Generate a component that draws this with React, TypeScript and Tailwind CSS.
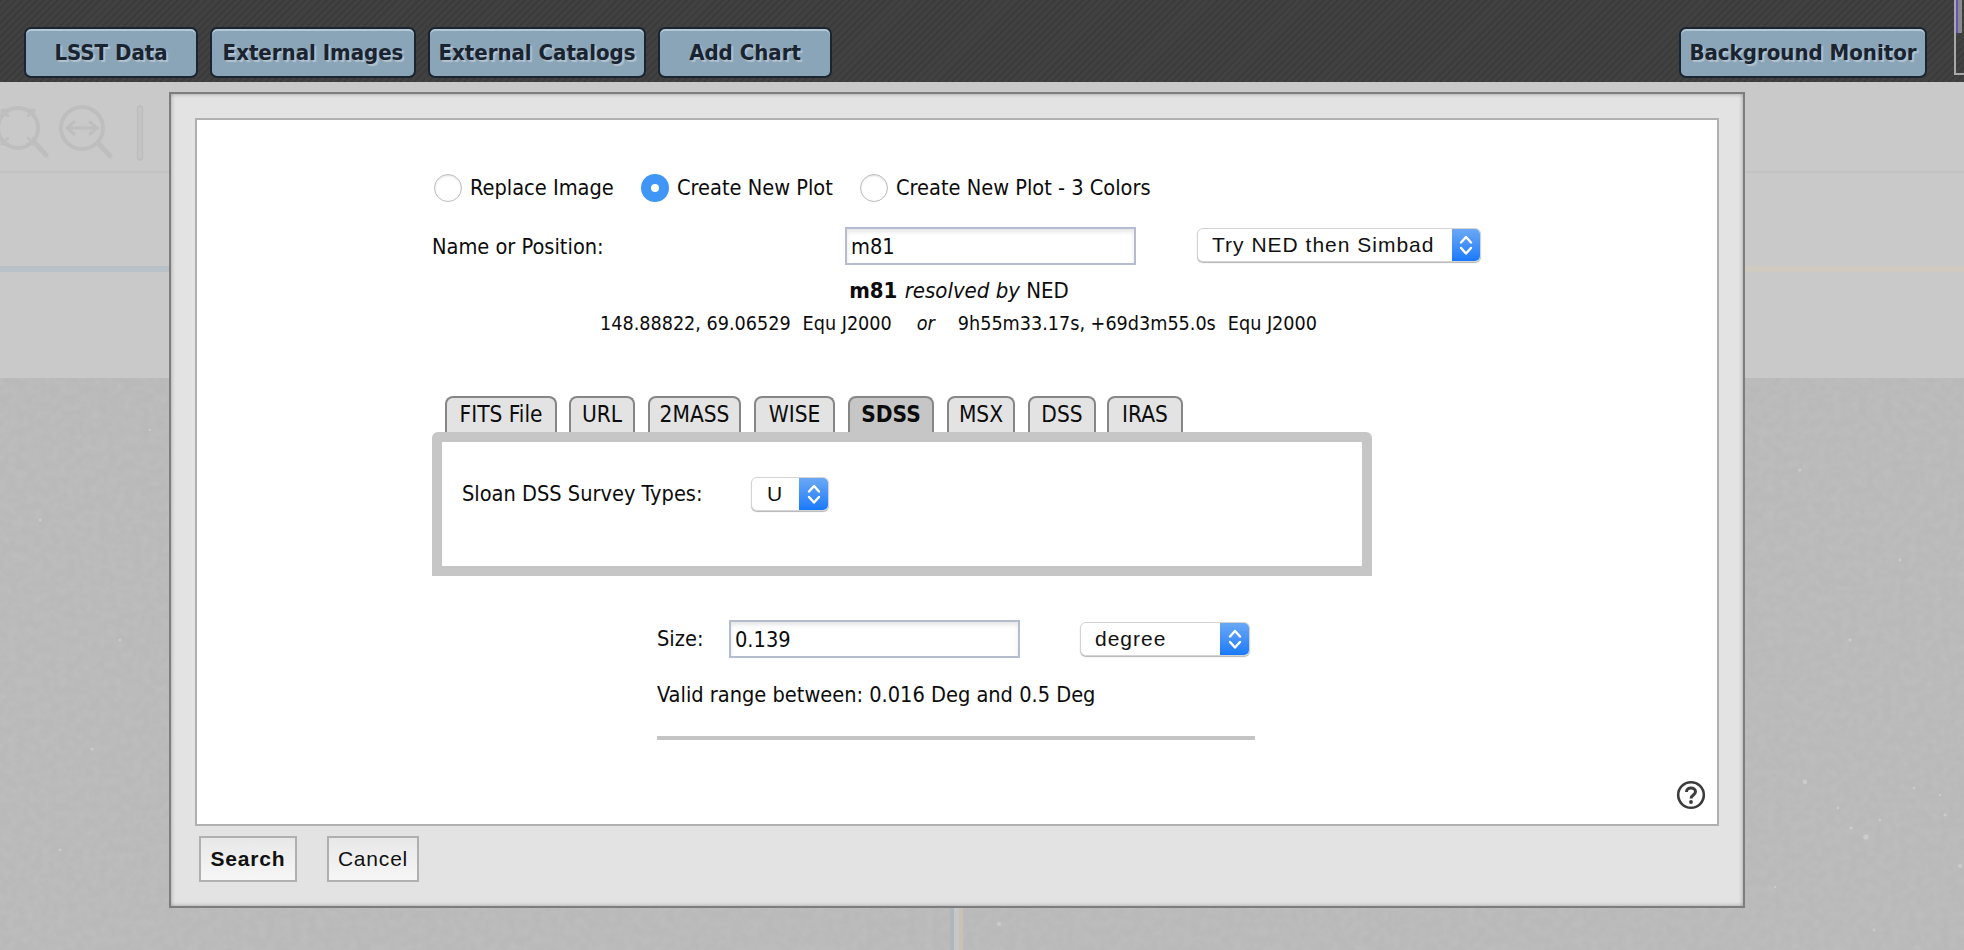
import React from "react";

const body = "font-['DejaVu_Sans_Condensed','DejaVu_Sans',sans-serif] text-[21.6px] text-[#0c0c0c]";

function HeaderButton({ label, className }: { label: string; className: string }) {
  return (
    <button
      className={`h-[51px] shrink-0 rounded-[7px] border-2 border-[#1a2531] bg-[#8ba5b8] shadow-[inset_0_2px_0_#b4c8d6] text-[22px] font-bold text-[#1a2430] [text-shadow:2px_2px_1px_#b4c3cf] whitespace-nowrap ${className}`}
    >
      {label}
    </button>
  );
}

function Radio({ checked }: { checked?: boolean }) {
  return checked ? (
    <span className="flex h-[28px] w-[28px] shrink-0 items-center justify-center rounded-full bg-[#3f96f6]">
      <span className="h-[8px] w-[8px] rounded-full bg-white" />
    </span>
  ) : (
    <span className="block h-[28px] w-[28px] shrink-0 rounded-full border border-[#bdbdbd] bg-white shadow-[inset_0_1px_2px_#e0e0e0]" />
  );
}

function Chevrons() {
  return (
    <svg width="16" height="24" viewBox="0 0 16 24" fill="none" stroke="white" strokeWidth="2.4" strokeLinecap="round" strokeLinejoin="round">
      <path d="M3 9.5 L8 4 L13 9.5" />
      <path d="M3 15 L8 20.5 L13 15" />
    </svg>
  );
}

function MacSelect({ label, className, textClass, arrowClass }: { label: string; className: string; textClass: string; arrowClass: string }) {
  return (
    <div className={`flex h-[34px] shrink-0 overflow-hidden rounded-[6px] border border-[#d4d4d4] bg-white shadow-[0_1px_1px_#b5b5b5] font-['Liberation_Sans',sans-serif] text-[21px] tracking-[1px] text-[#111] ${className}`}>
      <div className={`flex-1 leading-[31px] whitespace-nowrap ${textClass}`}>{label}</div>
      <div className={`flex items-center justify-center bg-gradient-to-b from-[#69a8f4] to-[#1679fb] ${arrowClass}`}>
        <Chevrons />
      </div>
    </div>
  );
}

function TextInput({ value }: { value: string }) {
  return (
    <div className="h-[38px] w-[291px] shrink-0 border-2 border-[#b5bccd] bg-white pl-[4px] leading-[35px] shadow-[inset_0_3px_4px_#e6e6e6]">
      {value}
    </div>
  );
}

const tabs = [
  { t: "FITS File", c: "w-[112px]" },
  { t: "URL", c: "w-[66px] ml-[12px]" },
  { t: "2MASS", c: "w-[93px] ml-[13px]" },
  { t: "WISE", c: "w-[81px] ml-[13px]" },
  { t: "SDSS", c: "w-[86px] ml-[13px] bg-[#c6c6c6] font-bold", active: true },
  { t: "MSX", c: "w-[68px] ml-[13px]" },
  { t: "DSS", c: "w-[68px] ml-[13px]" },
  { t: "IRAS", c: "w-[76px] ml-[11px]" },
];

const stars = [
  [1805, 782, 2.4], [1866, 837, 2.8], [1851, 828, 1.8], [1880, 820, 1.4], [1838, 808, 1.4], [1945, 815, 1.6],
  [1914, 788, 1.4], [1940, 795, 1.2], [1775, 887, 1.2], [1874, 930, 1.4], [1960, 866, 2],
  [999, 924, 2], [92, 749, 1.6], [40, 520, 1.4], [120, 640, 1.4], [1800, 470, 1.6], [1900, 560, 1.4], [1850, 640, 1.6], [60, 850, 1.4], [150, 430, 1.2],
];

export default function App() {
  return (
    <div className={`relative flex h-[950px] w-[1964px] flex-col overflow-hidden bg-[#b9b9b9] ${body}`}>
      {/* Top bar */}
      <header className="relative flex h-[82px] shrink-0 items-start bg-[#3d3d3d] bg-[repeating-linear-gradient(135deg,#3b3b3b_0px,#3b3b3b_2px,#414141_2px,#414141_5px)] pl-[24px] pt-[27px]">
        <HeaderButton label="LSST Data" className="w-[174px]" />
        <HeaderButton label="External Images" className="ml-[12px] w-[206px]" />
        <HeaderButton label="External Catalogs" className="ml-[12px] w-[218px]" />
        <HeaderButton label="Add Chart" className="ml-[12px] w-[174px]" />
        <HeaderButton label="Background Monitor" className="ml-auto w-[248px]" />
        <div className="ml-[27px] h-[75px] w-[10px] -translate-y-[27px] border-b-2 border-l-2 border-[#a8a8a8]">
          <div className="h-[33px] w-[6px] bg-[linear-gradient(90deg,#6a4fc0_0,#6a4fc0_2px,#8a8a8a_2px)]" />
        </div>
      </header>

      {/* Dimmed toolbar */}
      <div className="h-[91px] shrink-0 border-b-2 border-[#c3c3c3] bg-[#c9c9c9]">
        <svg width="180" height="90" viewBox="0 82 180 90" fill="none" stroke="#bebebe" strokeWidth="4" strokeLinecap="round">
          <circle cx="18" cy="128" r="20" />
          <path d="M34 142 L46 155" strokeWidth="5" />
          <path d="M8 116 L2 110 M8 110 H2 V116 M28 116 L34 110 M28 110 H34 V116 M8 138 L2 144 M2 138 V144 H8 M28 138 L33 144 M33 138 V144 H27" strokeWidth="2.5" />
          <circle cx="82" cy="128" r="21" />
          <path d="M98 143 L110 156" strokeWidth="5" />
          <path d="M68 128 H96 M74 122 L67 128 L74 134 M90 122 L97 128 L90 134" strokeWidth="3" />
          <rect x="137.500" y="106" width="5" height="54" rx="2.500" strokeWidth="1.500" fill="#c4c4c4" />
        </svg>
      </div>

      {/* Dimmed strip */}
      <div className="h-[205px] shrink-0 bg-[#c9c9c9] pt-[93px]">
        <div className="h-[6px] bg-[linear-gradient(90deg,#b9c1c8_0,#b9c1c8_900px,#d0cbc0_1000px,#d0cbc0_100%)]" />
      </div>

      {/* Dimmed image */}
      <div className="relative flex-1 bg-[#b9b9b9]">
        <svg className="absolute inset-0 h-full w-full" width="1964" height="572">
          <filter id="grain" x="0" y="0" width="100%" height="100%">
            <feTurbulence type="fractalNoise" baseFrequency="0.14" numOctaves="2" seed="4" />
            <feColorMatrix type="matrix" values="0 0 0 0 0.5  0 0 0 0 0.5  0 0 0 0 0.5  0.1 0 0 0 -0.035" />
          </filter>
          <filter id="grainLight" x="0" y="0" width="100%" height="100%">
            <feTurbulence type="fractalNoise" baseFrequency="0.12" numOctaves="2" seed="11" />
            <feColorMatrix type="matrix" values="0 0 0 0 0.9  0 0 0 0 0.9  0 0 0 0 0.9  0.14 0 0 0 -0.045" />
          </filter>
          <rect width="1964" height="572" filter="url(#grain)" />
          <rect width="1964" height="572" filter="url(#grainLight)" />
          <rect x="950" y="0" width="4" height="572" fill="#b0b6bc" />
          <rect x="954" y="0" width="5" height="572" fill="#c6c8c7" />
          <rect x="959" y="0" width="4" height="572" fill="#c8c2b6" />
          {stars.map(([x, y, r], i) => (
            <circle key={i} cx={x} cy={y - 378} r={r} fill="#d0d0d0" opacity="0.75" />
          ))}
        </svg>
      </div>

      {/* Dialog */}
      <div className="absolute left-[169px] top-[92px] flex h-[816px] w-[1576px] flex-col border-2 border-[#7d7d7d] bg-[#e3e3e3] pl-[24px] pr-[24px] pt-[24px] shadow-[inset_0_0_4px_#9a9a9a]">
        <div className="relative h-[708px] w-[1524px] shrink-0 border-2 border-[#b0b0b0] bg-white">
          {/* Radios */}
          <div className="ml-[237px] mt-[54px] flex h-[28px] items-center">
            <Radio />
            <span className="ml-[8px] w-[171px] whitespace-nowrap">Replace Image</span>
            <Radio checked />
            <span className="ml-[8px] w-[183px] whitespace-nowrap">Create New Plot</span>
            <Radio />
            <span className="ml-[8px] whitespace-nowrap">Create New Plot - 3 Colors</span>
          </div>

          {/* Name */}
          <div className="ml-[235px] mt-[25px] flex items-center">
            <span className="w-[413px] pt-[2px]">Name or Position:</span>
            <TextInput value="m81" />
            <MacSelect label="Try NED then Simbad" className="-mt-[2px] ml-[61px] w-[284px]" textClass="pl-[14px]" arrowClass="w-[28px]" />
          </div>

          <div className="mt-[12px] pl-[4px] text-center text-[22px] leading-[28px]">
            <b>m81</b> <i className="ml-[1px]">resolved by</i> NED
          </div>
          <div className="mt-[5px] flex justify-center whitespace-pre pl-[3px] text-[19.6px] leading-[28px]">
            <span>148.88822, 69.06529</span>
            <span className="ml-[12px]">Equ J2000</span>
            <i className="ml-[25px]">or</i>
            <span className="ml-[23px]">9h55m33.17s, +69d3m55.0s</span>
            <span className="ml-[12px]">Equ J2000</span>
          </div>

          {/* Tabs */}
          <div className="ml-[248px] mt-[58px] flex h-[36px] text-[22.5px]">
            {tabs.map((t) => (
              <div
                key={t.t}
                className={`h-[36px] shrink-0 whitespace-nowrap rounded-t-[8px] border-2 border-b-0 border-[#868686] text-center leading-[33px] ${t.active ? "" : "bg-[#e3e3e3]"} ${t.c}`}
              >
                {t.t}
              </div>
            ))}
          </div>
          <div className="ml-[235px] flex h-[144px] w-[940px] rounded-t-[6px] border-[10px] border-[#c6c6c6] bg-white pl-[20px] pt-[35px]">
            <span className="w-[289px] leading-[34px]">Sloan DSS Survey Types:</span>
            <MacSelect label="U" className="w-[78px]" textClass="pl-[15px]" arrowClass="w-[29px]" />
          </div>

          {/* Size */}
          <div className="ml-[460px] mt-[44px] flex items-center">
            <span className="w-[72px]">Size:</span>
            <TextInput value="0.139" />
            <MacSelect label="degree" className="ml-[60px] w-[170px]" textClass="pl-[14px]" arrowClass="w-[29px]" />
          </div>
          <div className="ml-[460px] mt-[23px] leading-[28px]">Valid range between: 0.016 Deg and 0.5 Deg</div>
          <div className="ml-[460px] mt-[27px] h-[4px] w-[598px] bg-[#c4c4c4]" />

          {/* Help */}
          <svg className="absolute left-[1479px] top-[660px]" width="30" height="30" viewBox="0 0 30 30" fill="none" stroke="#3c3c3c">
            <circle cx="15" cy="15" r="12.800" strokeWidth="2.600" />
            <path d="M10.500 12 C10.500 6.500 19.500 6.800 19.500 11.800 C19.500 15 15 15 15 18.500" strokeWidth="3" />
            <circle cx="15" cy="22" r="1.900" fill="#3c3c3c" stroke="none" />
          </svg>
        </div>

        {/* Footer */}
        <div className="ml-[4px] mt-[10px] flex font-['Liberation_Sans',sans-serif] text-[21px] tracking-[0.8px] text-[#111]">
          <button className="h-[46px] w-[98px] border-2 border-[#b0b0b0] bg-gradient-to-b from-[#e8e8e8] to-[#f6f6f6] font-bold">Search</button>
          <button className="ml-[30px] h-[46px] w-[92px] border-2 border-[#b0b0b0] bg-gradient-to-b from-[#e8e8e8] to-[#f6f6f6]">Cancel</button>
        </div>
      </div>
    </div>
  );
}
